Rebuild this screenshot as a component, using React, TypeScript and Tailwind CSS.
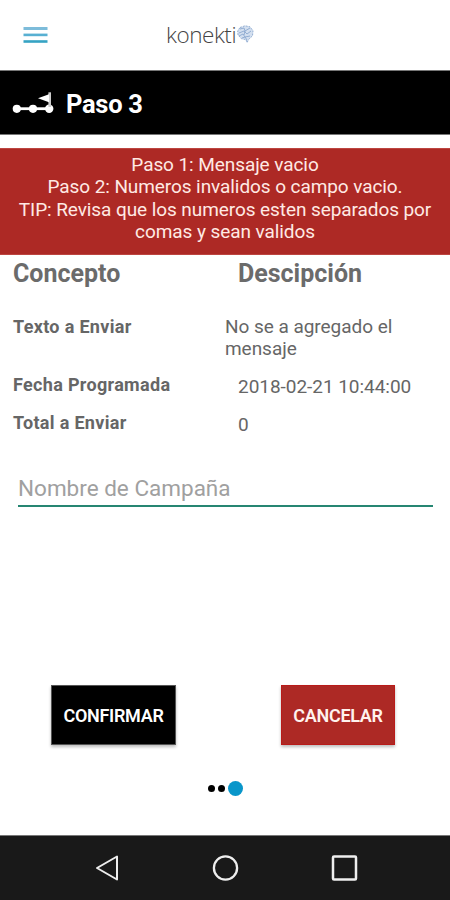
import React from 'react';

function MenuIcon() {
  return (
    <svg className="ml-[23px] mt-[26px] h-[18px] w-[26px]" viewBox="0 0 26 18">
      <rect x="0.5" y="1" width="24" height="3" fill="#7dbcda" />
      <rect x="0.5" y="7.6" width="24" height="2.6" fill="#58b0d2" />
      <rect x="0.5" y="14.2" width="24" height="2.6" fill="#36a3c4" />
    </svg>
  );
}

function BrainMark() {
  return (
    <svg className="mt-[25px] h-[20px] w-[17px]" viewBox="0 0 17 20">
      <path d="M3 2.5 8 .8l5 1 3 4-.5 5-4 3.8-1.4 3-1.1-3-4.5-.8L1 10l-.3-4z" fill="#d3dfef" />
      <g fill="none" stroke="#8ba8cf" strokeWidth=".9">
        <path d="M3 2.5 8 .8l5 1 3 4-.5 5-4 3.8-1.4 3-1.1-3-4.5-.8L1 10l-.3-4z" strokeDasharray="2 1" />
        <path d="m3 4 4-1 1 3 5-3M2 8l5-2 3 3 4-3M2 11l4-2 2 3 5-1M5 13l3-1 2 3M8 6l-1 4" />
      </g>
    </svg>
  );
}

function StepsIcon() {
  return (
    <svg className="ml-[12px] mt-[20px] h-[24px] w-[43px]" viewBox="0 0 43 24" fill="#fff">
      <path d="M5 16.3h32v2.8H5z" />
      <circle cx="4.8" cy="17.8" r="4.1" />
      <circle cx="21" cy="17.8" r="4.1" />
      <circle cx="37.2" cy="17.8" r="4.2" />
      <path d="M36.4 1.3h2.6V16h-2.6z" fill="#ccc" />
      <path d="m26 7.2 11-4v8z" />
    </svg>
  );
}

const labelClass = 'w-[225px] pl-[13px] text-[18px] leading-[22px] font-bold tracking-[0.32px] text-[#666]';
const valueClass = 'text-[19px] leading-[22px] tracking-[-0.04px]';

export default function App() {
  return (
    <div className="flex h-[900px] w-[450px] flex-col overflow-hidden bg-white font-['Roboto',sans-serif]">
      <header className="flex h-[70px] shrink-0">
        <MenuIcon />
        <div className="ml-[117px] flex">
          <span className="mt-[19px] w-[71px] font-['Open_Sans',sans-serif] text-[22.5px] leading-[31px] font-light tracking-[-0.45px] text-[#444]">konekti</span>
          <BrainMark />
        </div>
      </header>
      <div className="flex h-[65px] shrink-0 border-y border-[#777] bg-black text-white">
        <StepsIcon />
        <h1 className="ml-[11px] mt-[16px] text-[25.5px] leading-[34px] font-bold tracking-[-0.3px]">Paso 3</h1>
      </div>
      <section className="mt-[13px] h-[107px] shrink-0 border-y border-[#bd4540] bg-[#ad2925] pt-[5px] text-center text-[19px] leading-[22.3px] tracking-[-0.08px] text-[#ffe9e4]">
        <p>Paso 1: Mensaje vacio</p>
        <p>Paso 2: Numeros invalidos o campo vacio.</p>
        <p>TIP: Revisa que los numeros esten separados por<br />comas y sean validos</p>
      </section>
      <div className="flex h-[61px] shrink-0 pt-[4px] text-[25px] leading-[30px] font-bold text-[#6b6b6b]">
        <h2 className="w-[238px] pl-[13px]">Concepto</h2>
        <h2>Descipción</h2>
      </div>
      <dl className="h-[145px] shrink-0 text-[#666]">
        <div className="flex h-[58px]">
          <dt className={labelClass}>Texto a Enviar</dt>
          <dd className={valueClass}>No se a agregado el<br />mensaje</dd>
        </div>
        <div className="flex h-[38px]">
          <dt className={labelClass}>Fecha Programada</dt>
          <dd className={`ml-[13px] mt-[2px] ${valueClass}`}>2018-02-21 10:44:00</dd>
        </div>
        <div className="flex">
          <dt className={labelClass}>Total a Enviar</dt>
          <dd className={`ml-[13px] mt-[2px] ${valueClass}`}>0</dd>
        </div>
      </dl>
      <div className="ml-[18px] mr-[17px] h-[46px] shrink-0 border-b-2 border-[#268672] pt-[12px] text-[22.5px] leading-[31px] text-[#a0a0a0]">Nombre de Campaña</div>
      <div className="mt-[178px] flex shrink-0 pl-[51px]">
        <button className="h-[60px] w-[125px] border border-[#555] bg-black text-[18px] font-semibold tracking-[-0.3px] text-white shadow-[0_2px_3px_#0004]">CONFIRMAR</button>
        <button className="ml-[105px] h-[60px] w-[114px] border border-[#b91b19] bg-[#ad2925] text-[18px] font-semibold tracking-[-0.3px] text-[#fff2ee] shadow-[0_2px_3px_#0004]">CANCELAR</button>
      </div>
      <div className="mt-[36px] flex h-[15px] shrink-0 items-center pl-[208px]">
        <i className="h-[7px] w-[7px] rounded-full bg-black" />
        <i className="ml-[3px] h-[7px] w-[7px] rounded-full bg-black" />
        <i className="ml-[3px] h-[15px] w-[15px] rounded-full bg-[#0996ca]" />
      </div>
      <nav className="mt-auto flex h-[65px] shrink-0 border-t border-[#777] bg-[#191919]">
        <svg className="h-[64px] w-[450px]" viewBox="0 0 450 64" fill="none" stroke="#eee" strokeWidth="2">
          <path d="M97 32 117 20.5v23z" strokeLinejoin="round" />
          <circle cx="225.5" cy="32" r="11.6" strokeWidth="2.3" />
          <rect x="333" y="20.5" width="23" height="23" rx="1" strokeWidth="2.5" />
        </svg>
      </nav>
    </div>
  );
}
